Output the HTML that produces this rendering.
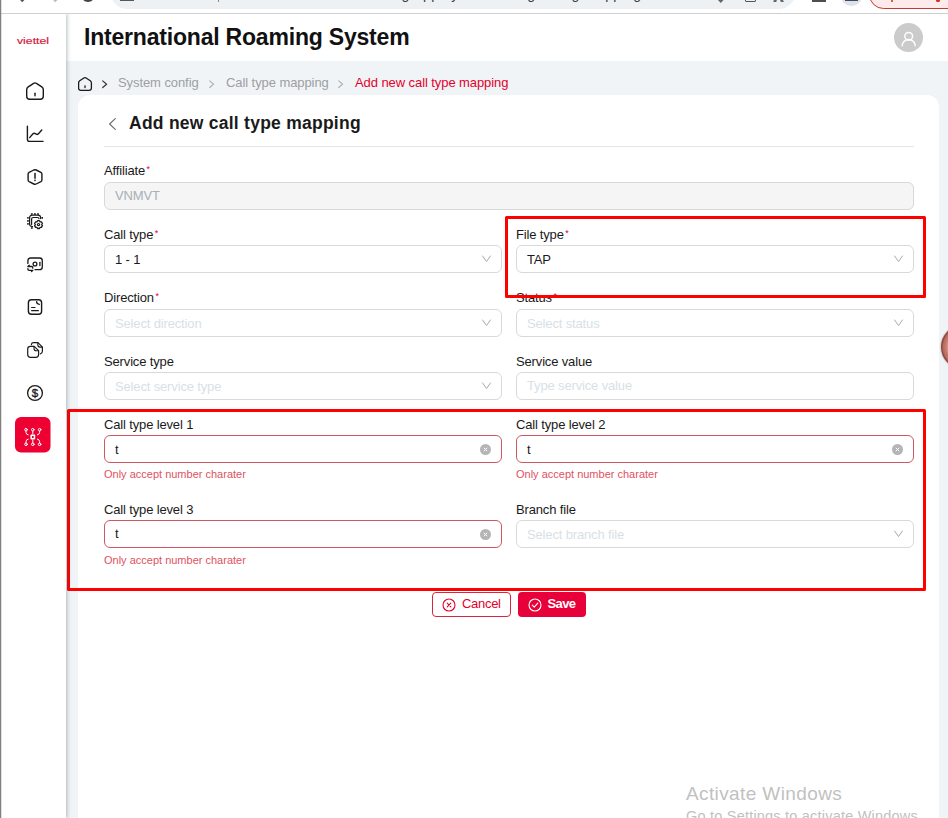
<!DOCTYPE html>
<html lang="en">
<head>
<meta charset="utf-8">
<title>International Roaming System</title>
<style>
*{box-sizing:border-box;margin:0;padding:0}
html,body{width:948px;height:818px;overflow:hidden;background:#f0f4f6}
body{position:relative;font-family:"Liberation Sans",sans-serif;color:#1a1a1a;font-size:13px}
.abs{position:absolute}
/* browser strip */
#chrome{z-index:8;left:0;top:0;width:948px;height:14px;background:#fff;border-bottom:1px solid #d0d0d0;overflow:hidden}
#urlbar{left:109.5px;top:-26px;width:686.5px;height:34.5px;border-radius:17.5px;background:#eef1f3}
#urltext,#urltext2{left:228px;top:-14px;font-size:14px;line-height:16px;color:#3c3c3c;white-space:nowrap;letter-spacing:.42px}
#leftedge{left:0;top:0;width:1px;height:818px;background:#808080;box-shadow:1px 0 0 rgba(150,150,150,.3);z-index:9}
/* sidebar */
#sidebar{left:0;top:14px;width:66px;height:804px;background:#fff;box-shadow:1px 0 4px rgba(60,80,90,.38);z-index:5}
#logo{left:0;top:20px;width:64px;text-align:center;font-size:10px;font-weight:bold;color:#e4002b;letter-spacing:.2px}
.ico{left:23px;width:20px;height:20px}
.ico svg{display:block;width:20px;height:20px;fill:none;stroke:#1a1a1a;stroke-width:1.5;stroke-linecap:round;stroke-linejoin:round}
#active{left:13px;top:405px;width:36px;height:36px;border-radius:5px;background:#e4002b}
/* header */
#header{left:66px;top:14px;width:882px;height:47px;background:#fff}
#title{left:18px;top:10px;font-size:23px;font-weight:bold;color:#111;white-space:nowrap;letter-spacing:-.2px}
#avatar{left:828px;top:9px;width:29px;height:29px;border-radius:50%;background:#cbcbcb}
/* breadcrumb */
#crumb{left:78px;top:74px;height:18px;font-size:13px;color:#9c9fa3;white-space:nowrap;letter-spacing:-.08px}
#crumb span{position:absolute;top:0;line-height:18px}
/* card */
#card{left:78px;top:95px;width:861px;height:740px;background:#fff;border-radius:12px}
#ctitle{left:51px;top:18px;font-size:17.5px;letter-spacing:.25px;font-weight:bold;color:#1a1a1a;white-space:nowrap}
#divider{left:26px;top:51px;width:810px;height:1px;background:#e6e6e6}
.lbl{font-size:13px;color:#1a1a1a;white-space:nowrap;line-height:16px;letter-spacing:-.15px}
.lbl i{font-style:normal;color:#e4002b;font-size:9px;position:relative;top:-3px;margin-left:1.5px}
.inp{height:28px;border:1px solid #d9d9d9;border-radius:6px;background:#fff;font-size:13px;line-height:26px;padding:1px 0 0 10px;color:#1a1a1a;white-space:nowrap;letter-spacing:-.15px}
.inp.up{padding-top:0}
.inp.dis{background:#f5f5f5;color:#a9afb6}
.inp.ph{color:#d9dfe5}
.inp.err{border-color:#cd5860}
.chev{position:absolute;right:9px;top:9px;width:11px;height:8px}
.chev svg{display:block}
.clr{position:absolute;right:10.5px;top:7.5px;width:11px;height:11px;border-radius:50%;background:#b5b5b5;line-height:0}
.clr svg{display:block}
.errt{font-size:11px;color:#e0525f;white-space:nowrap;line-height:14px}
.L{left:26px;width:398px}
.R{left:438px;width:398px}
.btn{height:25px;border-radius:4px;font-size:13px;line-height:21px;white-space:nowrap}
.redbox{border:3px solid #fe0000;border-radius:1.5px}
#wm1{left:686px;top:783px;font-size:19px;line-height:22px;letter-spacing:.39px;color:#c1c1c1;white-space:nowrap}
#wm2{left:686px;top:807px;font-size:14.5px;line-height:18px;letter-spacing:.21px;color:#c1c1c1;white-space:nowrap}
</style>
</head>
<body>
<div id="sidebar" class="abs">
  <svg class="abs" style="left:0;top:0" width="66" height="804" viewBox="0 14 66 804" fill="none" stroke="#1a1a1a" stroke-width="1.4" stroke-linecap="round" stroke-linejoin="round">
    <text transform="translate(17 44) scale(1.115 .74)" font-family="Liberation Sans, sans-serif" font-size="11" fill="#d3173c" stroke="#d3173c" stroke-width=".2">viettel</text>
    <!-- home -->
    <g transform="translate(26 82)">
      <path d="M7.6 1.3Q9 .4 10.4 1.3L15.8 4.9Q17.3 5.9 17.3 7.6V14.3Q17.3 17.3 14.3 17.3H3.7Q.7 17.3 .7 14.3V7.6Q.7 5.9 2.2 4.9Z"/>
      <path d="M9 11.3V13.7"/>
    </g>
    <!-- chart -->
    <g transform="translate(26 125)">
      <path d="M1.4 1.2V14.2Q1.4 16.4 3.6 16.4H17"/>
      <path d="M3.6 12.6L7 8.8Q8.1 7.7 9.3 8.6Q10.7 9.9 12 9.2L15.8 5"/>
    </g>
    <!-- alert hexagon -->
    <g transform="translate(35 177)">
      <path d="M-1.2 -7Q0 -7.6 1.2 -7L5.9 -4.6Q6.9 -4 6.9 -2.9V2.9Q6.9 4 5.9 4.6L1.2 7Q0 7.6 -1.2 7L-5.9 4.6Q-6.9 4 -6.9 2.9V-2.9Q-6.9 -4 -5.9 -4.6Z"/>
      <path d="M0 -3.4V1.3" stroke-width="1.5"/>
      <path d="M0 3.3V3.4" stroke-width="1.6"/>
    </g>
    <!-- chip + gear -->
    <g transform="translate(27 213)" stroke-width="1.2">
      <path d="M5.6 13.6H5.2Q2.6 13.6 2.6 11V4.8Q2.6 2.2 5.2 2.2H11Q13.6 2.2 13.6 4.8V5.6"/>
      <path d="M4.6 11.6V6Q4.6 4.5 6.1 4.5H10.6Q11.9 4.5 12 5.6"/>
      <path d="M4.8 .2V1.7M7.9 .2V1.7M11 .2V1.7M.2 4.9H1.7M.2 7.8H1.7M.2 10.8H1.7M14.5 4.9H16M4.8 14.3V15.8" stroke-width="1.8" stroke-linecap="butt"/>
      <g transform="translate(11.5 11.6)">
        <path d="M-1 -3.9H1L1.6 -2.7L2.9 -2.8L3.9 -1.1L3.2 0L3.9 1.1L2.9 2.8L1.6 2.7L1 3.9H-1L-1.6 2.7L-2.9 2.8L-3.9 1.1L-3.2 0L-3.9 -1.1L-2.9 -2.8L-1.6 -2.7Z" stroke-width="1.3"/>
        <circle cx="0" cy="0" r="1.1" stroke-width="1.2"/>
      </g>
    </g>
    <!-- card swap -->
    <g transform="translate(27 256)" stroke-width="1.3">
      <path d="M.9 7.4V4.7Q.9 2 3.6 2H12.6Q15.3 2 15.3 4.7V11Q15.3 13.7 12.6 13.7H8"/>
      <circle cx="8" cy="8" r="1.9"/>
      <path d="M12.9 6.3V9.6"/>
      <path d="M2.2 9.2L.9 10.5H4.6Q5.8 10.5 5.8 11.7V12.2"/>
      <path d="M4.5 15.6L5.8 14.3H2.1Q.9 14.3 .9 13.1V12.6"/>
    </g>
    <!-- document -->
    <g transform="translate(27 299)">
      <path d="M4.4 .8H11.6Q14.6 .8 14.6 3.8V12.2Q14.6 15.2 11.6 15.2H4.4Q1.4 15.2 1.4 12.2V3.8Q1.4 .8 4.4 .8Z"/>
      <path d="M9.6 2.6Q9.6 5.2 12.4 5.3" stroke-width="1.3"/>
      <path d="M4.6 8.5H8M4.6 11.6H11.4" stroke-width="1.2"/>
    </g>
    <!-- stacked docs -->
    <g transform="translate(27 342)" stroke-width="1.2">
      <path d="M3.5 4.3H7.2L11.6 8.7V12.5Q11.6 15.3 8.8 15.3H3.5Q.7 15.3 .7 12.5V7.1Q.7 4.3 3.5 4.3Z"/>
      <path d="M7 4.6V6.4Q7 8.7 9.3 8.7H11.3" stroke-width="1.1"/>
      <path d="M4.4 2.6Q4.6 .7 6.6 .7H11L15.4 5.1V9.3Q15.4 11.5 13.4 11.8"/>
      <path d="M10.8 1V2.8Q10.8 5.1 13.1 5.1H15.1" stroke-width="1.1"/>
    </g>
    <!-- dollar -->
    <g transform="translate(35 393)">
      <circle cx="0" cy="0" r="7.4" stroke-width="1.3"/>
      <text x="0" y="4" text-anchor="middle" font-family="Liberation Sans, sans-serif" font-size="11.5" fill="#1a1a1a" stroke="#1a1a1a" stroke-width=".35">$</text>
    </g>
    <!-- active -->
    <rect x="15" y="417" width="35.5" height="35.5" rx="6" fill="#ee0033" stroke="none"/>
    <g transform="translate(32.8 437)" stroke="#fff" stroke-width="1">
      <rect x="-2.4" y="-2.4" width="4.8" height="4.8" rx="1" fill="#fff" stroke="none"/>
      <rect x="-.9" y="-.9" width="1.8" height="1.8" fill="#8a1226" stroke="none"/>
      <circle cx="-6.8" cy="-7.3" r="1.3"/><circle cx="0" cy="-7.3" r="1.3"/><circle cx="6.8" cy="-7.3" r="1.3"/>
      <circle cx="-6.8" cy="7.3" r="1.3"/><circle cx="0" cy="7.3" r="1.3"/><circle cx="6.8" cy="7.3" r="1.3"/>
      <path d="M0 -6V-3M0 6V3"/>
      <path d="M-6.8 -6V-4.6Q-6.8 -2.4 -4.6 -2.1M6.8 -6V-4.6Q6.8 -2.4 4.6 -2.1M-6.8 6V4.6Q-6.8 2.4 -4.6 2.1M6.8 6V4.6Q6.8 2.4 4.6 2.1"/>
    </g>
  </svg>
</div>
<div id="header" class="abs">
  <div id="title" class="abs">International Roaming System</div>
  <div id="avatar" class="abs"><svg width="29" height="29" viewBox="0 0 29 29" fill="none" stroke="#fff" stroke-width="1.5" stroke-linecap="butt"><circle cx="14.7" cy="13.3" r="3.9"/><path d="M8 23.2A6.7 6.7 0 0 1 21.4 23.2"/></svg></div>
</div>
<div id="crumb" class="abs">
  <svg class="abs" style="left:0;top:3px" width="140" height="15" viewBox="0 0 140 15" fill="none" stroke-linecap="round" stroke-linejoin="round">
    <path d="M5.9 1Q7 .3 8.1 1L12.3 3.8Q13.4 4.6 13.4 5.9V11.1Q13.4 13.4 11.1 13.4H2.9Q.6 13.4 .6 11.1V5.9Q.6 4.6 1.7 3.8Z" stroke="#1a1a1a" stroke-width="1.3"/>
    <path d="M7 8.8V10.6" stroke="#1a1a1a" stroke-width="1.3"/>
    <path d="M24.7 3.9L28.6 7.2L24.7 10.5" stroke="#333" stroke-width="1.2"/>
  </svg>
  <svg class="abs" style="left:130px;top:5px" width="8" height="10" viewBox="0 0 8 10" fill="none" stroke="#a9acb0" stroke-width="1.1" stroke-linecap="round" stroke-linejoin="round"><path d="M1.7 1.9L5.6 5.2L1.7 8.5"/></svg>
  <svg class="abs" style="left:259px;top:5px" width="8" height="10" viewBox="0 0 8 10" fill="none" stroke="#a9acb0" stroke-width="1.1" stroke-linecap="round" stroke-linejoin="round"><path d="M1.7 1.9L5.6 5.2L1.7 8.5"/></svg>
  <span style="left:40px">System config</span>
  <span style="left:148px">Call type mapping</span>
  <span style="left:277px;color:#e4002b">Add new call type mapping</span>
</div>
<div id="card" class="abs">
  <svg class="abs" style="left:30px;top:22px" width="10" height="14" viewBox="0 0 10 14" fill="none" stroke="#707070" stroke-width="1.2" stroke-linecap="round" stroke-linejoin="round"><path d="M7.3 1.6L1.6 7L7.3 12.4"/></svg>
  <div id="ctitle" class="abs">Add new call type mapping</div>
  <div id="divider" class="abs"></div>

  <div class="abs lbl" style="left:26px;top:68px">Affiliate<i>*</i></div>
  <div class="abs inp dis up" style="left:26px;top:87px;width:810px">VNMVT</div>

  <div class="abs lbl L" style="top:132px">Call type<i>*</i></div>
  <div class="abs inp L" style="top:150px">1 - 1<span class="chev"><svg width="11" height="8" viewBox="0 0 11 8" fill="none" stroke="#a8a8a8" stroke-width="1" stroke-linecap="round" stroke-linejoin="round"><path d="M1.6 1L5.5 6.6L9.4 1"/></svg></span></div>
  <div class="abs lbl R" style="top:132px">File type<i>*</i></div>
  <div class="abs inp R" style="top:150px">TAP<span class="chev"><svg width="11" height="8" viewBox="0 0 11 8" fill="none" stroke="#a8a8a8" stroke-width="1" stroke-linecap="round" stroke-linejoin="round"><path d="M1.6 1L5.5 6.6L9.4 1"/></svg></span></div>

  <div class="abs lbl L" style="top:195px">Direction<i>*</i></div>
  <div class="abs inp ph L" style="top:214px">Select direction<span class="chev"><svg width="11" height="8" viewBox="0 0 11 8" fill="none" stroke="#a8a8a8" stroke-width="1" stroke-linecap="round" stroke-linejoin="round"><path d="M1.6 1L5.5 6.6L9.4 1"/></svg></span></div>
  <div class="abs lbl R" style="top:195px">Status<i>*</i></div>
  <div class="abs inp ph R" style="top:214px">Select status<span class="chev"><svg width="11" height="8" viewBox="0 0 11 8" fill="none" stroke="#a8a8a8" stroke-width="1" stroke-linecap="round" stroke-linejoin="round"><path d="M1.6 1L5.5 6.6L9.4 1"/></svg></span></div>

  <div class="abs lbl L" style="top:259px">Service type</div>
  <div class="abs inp ph L" style="top:277px">Select service type<span class="chev"><svg width="11" height="8" viewBox="0 0 11 8" fill="none" stroke="#a8a8a8" stroke-width="1" stroke-linecap="round" stroke-linejoin="round"><path d="M1.6 1L5.5 6.6L9.4 1"/></svg></span></div>
  <div class="abs lbl R" style="top:259px">Service value</div>
  <div class="abs inp ph up R" style="top:277px">Type service value</div>

  <div class="abs lbl L" style="top:322px">Call type level 1</div>
  <div class="abs inp err L" style="top:340px">t<span class="clr"><svg width="11" height="11" viewBox="0 0 11 11" stroke="#fff" stroke-width="1" stroke-linecap="round"><path d="M4.1 4.1L6.9 6.9M6.9 4.1L4.1 6.9"/></svg></span></div>
  <div class="abs errt L" style="top:372px">Only accept number charater</div>
  <div class="abs lbl R" style="top:322px">Call type level 2</div>
  <div class="abs inp err R" style="top:340px">t<span class="clr"><svg width="11" height="11" viewBox="0 0 11 11" stroke="#fff" stroke-width="1" stroke-linecap="round"><path d="M4.1 4.1L6.9 6.9M6.9 4.1L4.1 6.9"/></svg></span></div>
  <div class="abs errt R" style="top:372px">Only accept number charater</div>

  <div class="abs lbl L" style="top:407px">Call type level 3</div>
  <div class="abs inp err up L" style="top:425px">t<span class="clr"><svg width="11" height="11" viewBox="0 0 11 11" stroke="#fff" stroke-width="1" stroke-linecap="round"><path d="M4.1 4.1L6.9 6.9M6.9 4.1L4.1 6.9"/></svg></span></div>
  <div class="abs errt L" style="top:458px">Only accept number charater</div>
  <div class="abs lbl R" style="top:407px">Branch file</div>
  <div class="abs inp ph R" style="top:425px">Select branch file<span class="chev"><svg width="11" height="8" viewBox="0 0 11 8" fill="none" stroke="#a8a8a8" stroke-width="1" stroke-linecap="round" stroke-linejoin="round"><path d="M1.6 1L5.5 6.6L9.4 1"/></svg></span></div>

  <div class="abs btn" style="left:354px;top:497px;width:79px;border:1px solid #d7263d;color:#e4002b;background:#fff;padding-left:29px;letter-spacing:-.3px"><svg class="abs" style="left:9px;top:4.5px" width="14" height="14" viewBox="0 0 14 14" fill="none" stroke="#e4002b" stroke-width="1.1" stroke-linecap="round"><circle cx="7" cy="7" r="6"/><path d="M5.2 5.2L8.8 8.8M8.8 5.2L5.2 8.8"/></svg>Cancel</div>
  <div class="abs btn" style="left:440px;top:497px;width:67.5px;background:#e8003a;color:#fff;padding-left:29.5px;font-weight:bold;line-height:23px;letter-spacing:-.6px"><svg class="abs" style="left:9.5px;top:5.5px" width="14" height="14" viewBox="0 0 14 14" fill="none" stroke="#fff" stroke-width="1.1" stroke-linecap="round" stroke-linejoin="round"><circle cx="7" cy="7" r="6"/><path d="M4.3 7.2L6.2 9.1L9.8 5.2"/></svg>Save</div>
</div>

<div class="abs redbox" style="left:505px;top:216px;width:421px;height:81.5px"></div>
<div class="abs redbox" style="left:67px;top:409px;width:859px;height:182px"></div>

<div class="abs" style="left:940.5px;top:324.5px;width:44px;height:44px;border-radius:50%;background:radial-gradient(circle closest-side at 50% 50%,#ecd5cf 0%,#e6c4bd 58%,#d59b90 68%,#c67b6f 78%,#b8695d 90%,#8c483e 96%,#78382f 100%);box-shadow:0 0 1.5px rgba(90,40,30,.7)"></div>
<div id="wm1" class="abs">Activate Windows</div>
<div id="wm2" class="abs">Go to Settings to activate Windows.</div>

<div id="chrome" class="abs">
  <div id="urlbar" class="abs"></div>
  <div id="urltext" class="abs" style="left:143px">Not secure</div>
  <div class="abs" style="left:217.5px;top:-10px;width:1px;height:12px;background:#8a8a8a"></div>
  <div id="urltext2" class="abs">10.60.108.38:8989/roaming-app/system-config/config-mapping/add</div>
  <div class="abs" style="left:20px;top:-3.6px;width:4.5px;height:4.5px;background:#555;transform:rotate(45deg)"></div>
  <div class="abs" style="left:52.5px;top:-3.6px;width:4.5px;height:4.5px;background:#bbb;transform:rotate(45deg)"></div>
  <div class="abs" style="left:80.5px;top:-12px;width:14px;height:14px;border-radius:50%;border:2.2px solid #444"></div>
  <div class="abs" style="left:120px;top:-1px;width:14px;height:2px;background:#555"></div>
  <div class="abs" style="left:745px;top:-8px;width:11px;height:9.5px;border:1.2px solid #555;border-radius:1px"></div>
  <div class="abs" style="left:719px;top:-2.5px;width:3.5px;height:3.5px;background:#666;transform:rotate(45deg)"></div>
  <div class="abs" style="left:774px;top:-2px;width:3px;height:3.5px;background:#666;transform:skewX(-20deg)"></div>
  <div class="abs" style="left:780px;top:-2px;width:3px;height:3.5px;background:#666;transform:skewX(20deg)"></div>
  <div class="abs" style="left:811.5px;top:-3px;width:14.5px;height:4.5px;background:#4a4f52"></div>
  <div class="abs" style="left:841px;top:-15px;width:20.5px;height:20.5px;border-radius:50%;background:#dfe3e8"></div>
  <div class="abs" style="left:845px;top:-3px;width:12.5px;height:4px;background:#3d4a68"></div>
  <div class="abs" style="left:869px;top:-20px;width:100px;height:28.5px;border-radius:14.5px;border:1px solid #c5392f;background:#fcebea"></div>
  <div class="abs" style="left:891px;top:-1px;width:1.5px;height:2.5px;background:#d8603a"></div>
  <div class="abs" style="left:936px;top:-1.5px;width:3.5px;height:3.5px;border-radius:50%;background:#d93025"></div>
</div>
<div id="leftedge" class="abs"></div>
</body>
</html>
